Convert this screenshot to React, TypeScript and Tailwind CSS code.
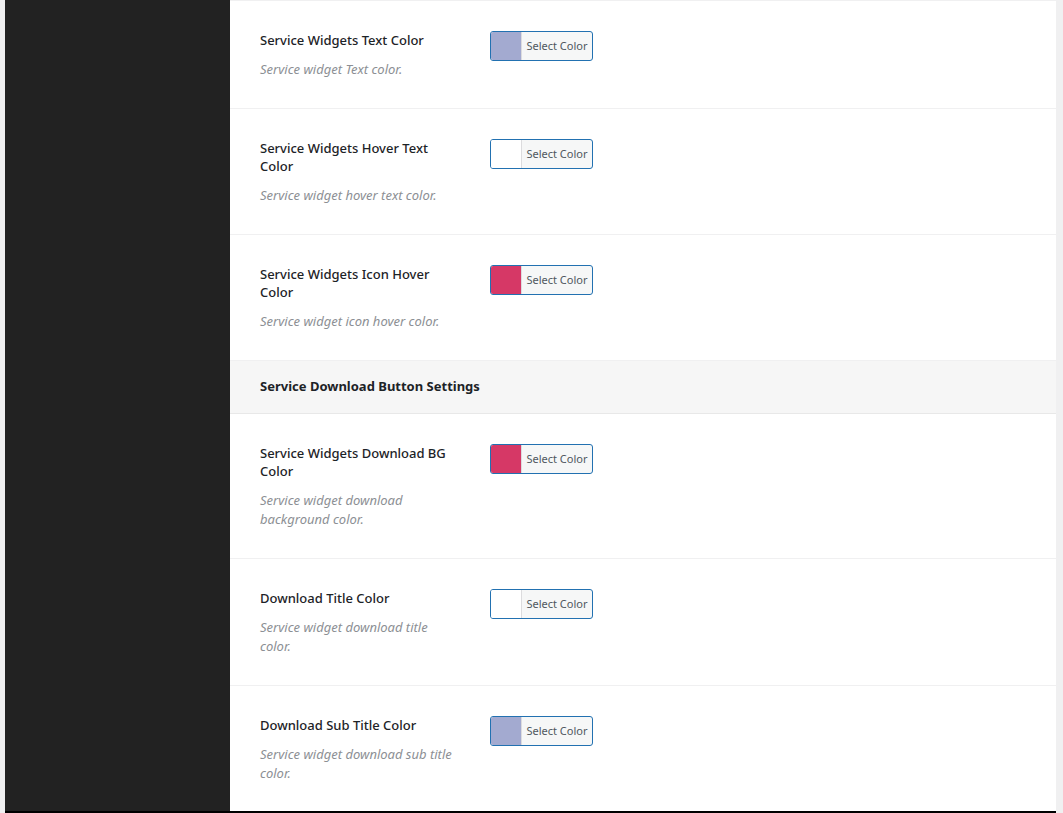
import React from 'react';

// ============================================================
// COLOR FIELD ROWS
// ============================================================

type Row = {
  title: string;
  desc: string;
  color: string;
};

const topRows: Row[] = [
  { title: 'Service Widgets Text Color', desc: 'Service widget Text color.', color: '#a3aad0' },
  { title: 'Service Widgets Hover Text Color', desc: 'Service widget hover text color.', color: '#ffffff' },
  { title: 'Service Widgets Icon Hover Color', desc: 'Service widget icon hover color.', color: '#d63866' },
];

const bottomRows: Row[] = [
  { title: 'Service Widgets Download BG Color', desc: 'Service widget download background color.', color: '#d63866' },
  { title: 'Download Title Color', desc: 'Service widget download title color.', color: '#ffffff' },
  { title: 'Download Sub Title Color', desc: 'Service widget download sub title color.', color: '#a3aad0' },
];

const ColorButton: React.FC<{ color: string }> = ({ color }) => (
  <button
    type="button"
    className="flex h-[30px] w-[103px] items-stretch overflow-hidden rounded-[3px] border border-[#2271b1] bg-[#f6f7f7] p-0"
  >
    <span className="block w-[31px] border-r border-[#dcdcde]" style={{ backgroundColor: color }} />
    <span className="flex flex-1 items-center justify-center text-[11px] text-[#50575e]">Select Color</span>
  </button>
);

const FieldRow: React.FC<{ row: Row }> = ({ row }) => (
  <div className="flex border-b border-[#f0f0f1] pl-[30px] pt-[30px] pb-[29px]">
    <div className="w-[200px] shrink-0">
      <div className="text-[13px] font-medium leading-[18px] text-[#1d2327]">{row.title}</div>
      <div className="mt-[11px] text-[13px] italic leading-[19px] text-[#8c8f94]">{row.desc}</div>
    </div>
    <div className="ml-[30px]">
      <ColorButton color={row.color} />
    </div>
  </div>
);

export default function App() {
  return (
    <div
      className="flex h-[813px] w-[1063px] flex-col overflow-hidden bg-[#f0f0f1]"
      style={{ fontFamily: '"Noto Sans", "Open Sans", sans-serif' }}
    >
      <div className="flex min-h-0 flex-1">
        <div className="ml-[5px] w-[225px] shrink-0 bg-[#222222]" />
        <div className="mt-px w-[826px] overflow-hidden bg-white">
          {topRows.map((r) => (
            <FieldRow key={r.title} row={r} />
          ))}
          <div className="flex h-[53px] items-center border-b border-[#e8e8e8] bg-[#f6f6f6] pl-[30px] text-[13px] font-bold text-[#1d2327]">
            Service Download Button Settings
          </div>
          {bottomRows.map((r) => (
            <FieldRow key={r.title} row={r} />
          ))}
        </div>
      </div>
      <div className="ml-[5px] h-[2px] w-[1051px] shrink-0 bg-black" />
    </div>
  );
}
